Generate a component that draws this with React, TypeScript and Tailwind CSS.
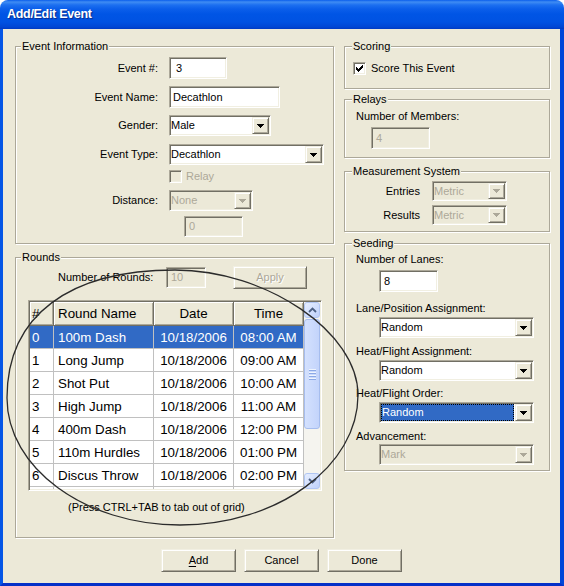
import React from "react";

// classic 3D borders used all over the dialog
const sunken =
  "border border-t-[#ACA899] border-l-[#ACA899] border-b-white border-r-white shadow-[inset_1px_1px_0_#716F64,inset_-1px_-1px_0_#F1EFE2]";
const raised =
  "border border-t-[#F1EFE2] border-l-[#F1EFE2] border-b-[#716F64] border-r-[#716F64] shadow-[inset_1px_1px_0_#fff,inset_-1px_-1px_0_#ACA899]";

type GroupProps = {
  title: string;
  className?: string;
  legend?: string;
  children?: React.ReactNode;
};

function Group({ title, className = "", legend = "left-[5px]", children }: GroupProps) {
  return (
    <div
      className={`relative border border-[#ACA899] shadow-[inset_1px_1px_0_#fff,1px_1px_0_#fff] ${className}`}
    >
      <span className={`absolute top-[-7px] ${legend} bg-[#ECE9D8] px-[1px] leading-[13px]`}>
        {title}
      </span>
      {children}
    </div>
  );
}

function TextBox({
  value,
  className = "",
  disabled,
}: {
  value: string;
  className?: string;
  disabled?: boolean;
}) {
  return (
    <div
      className={`${sunken} ${
        disabled ? "bg-[#ECE9D8] text-[#ACA899]" : "bg-white"
      } flex items-center ${className}`}
    >
      {value}
    </div>
  );
}

function Arrow({ disabled }: { disabled?: boolean }) {
  return (
    <svg width="7" height="4" viewBox="0 0 7 4" shapeRendering="crispEdges">
      <path
        d="M0 0h7v1H0z M1 1h5v1H1z M2 2h3v1H2z M3 3h1v1H3z"
        fill={disabled ? "#ACA899" : "#000"}
      />
    </svg>
  );
}

function Combo({
  value,
  className = "",
  disabled,
  focused,
}: {
  value: string;
  className?: string;
  disabled?: boolean;
  focused?: boolean;
}) {
  return (
    <div
      className={`${sunken} ${
        disabled ? "bg-[#ECE9D8] text-[#ACA899]" : "bg-white"
      } flex p-[1px] ${className}`}
    >
      <div className="flex-1 flex items-center min-w-0">
        {focused ? (
          <div className="flex-1 h-full flex items-center pl-[1px] mr-[1px] bg-[#316AC5] text-white outline-1 outline-dotted outline-[#000] -outline-offset-1">
            {value}
          </div>
        ) : (
          <span>{value}</span>
        )}
      </div>
      <div className={`w-[17px] h-full bg-[#ECE9D8] ${raised} flex items-center justify-center`}>
        <Arrow disabled={disabled} />
      </div>
    </div>
  );
}

function Check({ checked, disabled }: { checked?: boolean; disabled?: boolean }) {
  return (
    <div
      className={`w-[13px] h-[13px] shrink-0 ${sunken} ${
        disabled ? "bg-[#ECE9D8]" : "bg-white"
      } flex items-center justify-center`}
    >
      {checked && (
        <svg width="7" height="7" viewBox="0 0 7 7" shapeRendering="crispEdges">
          <path
            d="M6 0h1v1H6z M5 1h2v1H5z M0 2h1v1H0z M4 2h3v1H4z M0 3h2v1H0z M3 3h3v1H3z M0 4h5v1H0z M1 5h3v1H1z M2 6h1v1H2z"
            fill="#000"
          />
        </svg>
      )}
    </div>
  );
}

function Btn({
  children,
  disabled,
  className = "",
}: {
  children: React.ReactNode;
  disabled?: boolean;
  className?: string;
}) {
  return (
    <div
      className={`h-[23px] bg-[#ECE9D8] ${raised} flex items-center justify-center ${
        disabled ? "text-[#ACA899] [text-shadow:1px_1px_0_#fff]" : ""
      } ${className}`}
    >
      {children}
    </div>
  );
}

function Label({ children, className = "" }: { children: React.ReactNode; className?: string }) {
  return <div className={`leading-[13px] ${className}`}>{children}</div>;
}

const rounds = [
  ["0", "100m Dash", "10/18/2006", "08:00 AM"],
  ["1", "Long Jump", "10/18/2006", "09:00 AM"],
  ["2", "Shot Put", "10/18/2006", "10:00 AM"],
  ["3", "High Jump", "10/18/2006", "11:00 AM"],
  ["4", "400m Dash", "10/18/2006", "12:00 PM"],
  ["5", "110m Hurdles", "10/18/2006", "01:00 PM"],
  ["6", "Discus Throw", "10/18/2006", "02:00 PM"],
  ["", "", "", ""],
];

const cols = [
  { w: "w-[24px]", align: "justify-start pl-[2px]" },
  { w: "w-[100px]", align: "justify-start pl-[4px]" },
  { w: "w-[80px]", align: "justify-center" },
  { w: "w-[70px]", align: "justify-center" },
];

function ScrollBtn({ up }: { up?: boolean }) {
  return (
    <div className="h-[16px] rounded-[3px] border border-[#B1C6F3] bg-[linear-gradient(135deg,#E6EEFF,#BFD1FA)] flex items-center justify-center">
      <svg width="9" height="6" viewBox="0 0 9 6">
        <path
          d={up ? "M1 5L4.5 1.5L8 5" : "M1 1L4.5 4.5L8 1"}
          fill="none"
          stroke="#4D6185"
          strokeWidth="1.8"
        />
      </svg>
    </div>
  );
}

function RoundsGrid() {
  return (
    <div className={`ml-[12px] mt-[11px] w-[294px] h-[191px] p-[1px] ${sunken} bg-white flex`}>
      <div className="w-[274px] flex flex-col overflow-hidden text-[13.33px]">
        <div className="h-[24px] shrink-0 flex">
          {["#", "Round Name", "Date", "Time"].map((h, i) => (
            <div
              key={h}
              className={`${cols[i].w} h-full flex items-center ${cols[i].align} bg-[#ECE9D8] border-r border-b border-[#716F64] shadow-[inset_1px_1px_0_#fff,inset_-1px_-1px_0_#ACA899]`}
            >
              {h}
            </div>
          ))}
        </div>
        {rounds.map((r, ri) => (
          <div key={ri} className="h-[23px] shrink-0 flex">
            {r.map((c, ci) => (
              <div
                key={ci}
                className={`${cols[ci].w} h-full flex items-center ${cols[ci].align} border-r border-b border-[#C0C0C0] ${
                  ri === 0 ? "bg-[#316AC5] text-white" : "bg-white"
                }`}
              >
                {c}
              </div>
            ))}
          </div>
        ))}
      </div>
      <div className="w-[16px] flex flex-col bg-[#F5F4EF]">
        <ScrollBtn up />
        <div className="mt-[1px] h-[110px] rounded-[3px] border border-[#A6BDEE] bg-[linear-gradient(90deg,#D4E1FE,#C3D4FB)] flex flex-col items-center justify-center gap-[1px]">
          {[0, 1, 2, 3].map((i) => (
            <div key={i} className="w-[7px] flex flex-col">
              <div className="h-[1px] bg-[#EEF4FE]" />
              <div className="h-[1px] bg-[#8CA9E6]" />
            </div>
          ))}
        </div>
        <div className="flex-1" />
        <ScrollBtn />
      </div>
    </div>
  );
}

function EventInfo() {
  return (
    <Group title="Event Information" className="pt-[10px] pb-[6px]">
      <div className="flex items-center h-[22px]">
        <Label className="w-[142px] text-right">Event #:</Label>
        <TextBox value="3" className="ml-[11px] w-[58px] h-[22px] pl-[6px]" />
      </div>
      <div className="flex items-center h-[22px] mt-[7px]">
        <Label className="w-[142px] text-right">Event Name:</Label>
        <TextBox value="Decathlon" className="ml-[11px] w-[111px] h-[22px] pl-[3px]" />
      </div>
      <div className="flex items-center h-[21px] mt-[7px]">
        <Label className="w-[142px] text-right">Gender:</Label>
        <Combo value="Male" className="ml-[11px] w-[102px] h-[21px]" />
      </div>
      <div className="flex items-center h-[21px] mt-[8px]">
        <Label className="w-[142px] text-right">Event Type:</Label>
        <Combo value="Decathlon" className="ml-[11px] w-[155px] h-[21px]" />
      </div>
      <div className="flex items-center h-[13px] mt-[5px] pl-[153px] text-[#ACA899]">
        <Check disabled />
        <span className="ml-[4px] leading-[13px]">Relay</span>
      </div>
      <div className="flex items-center h-[21px] mt-[7px]">
        <Label className="w-[142px] text-right">Distance:</Label>
        <Combo value="None" disabled className="ml-[11px] w-[84px] h-[21px]" />
      </div>
      <div className="flex mt-[5px] pl-[168px]">
        <TextBox value="0" disabled className="w-[59px] h-[21px] pl-[4px]" />
      </div>
    </Group>
  );
}

function RoundsBox() {
  return (
    <Group title="Rounds" className="mt-[13px] pt-[8px] pb-[23px]">
      <div className="flex items-center h-[23px] pl-[42px]">
        <Label className="w-[108px]">Number of Rounds:</Label>
        <TextBox value="10" disabled className="w-[40px] h-[21px] pl-[4px]" />
        <Btn disabled className="ml-[27px] w-[74px]">
          Apply
        </Btn>
      </div>
      <RoundsGrid />
      <Label className="mt-[10px] pl-[52px]">(Press CTRL+TAB to tab out of grid)</Label>
    </Group>
  );
}

function RightColumn() {
  return (
    <div className="w-[206px] ml-[10px] flex flex-col">
      <Group title="Scoring" legend="left-[7px]" className="pt-[15px] pb-[13px] pl-[8px]">
        <div className="flex items-center h-[13px]">
          <Check checked />
          <span className="ml-[5px] leading-[13px]">Score This Event</span>
        </div>
      </Group>
      <Group title="Relays" legend="left-[7px]" className="mt-[10px] pt-[10px] pb-[8px]">
        <Label className="pl-[11px]">Number of Members:</Label>
        <div className="pl-[26px] mt-[4px]">
          <TextBox value="4" disabled className="w-[59px] h-[22px] pl-[4px]" />
        </div>
      </Group>
      <Group
        title="Measurement System"
        legend="left-[7px]"
        className="mt-[13px] pt-[9px] pb-[6px]"
      >
        <div className="flex items-center h-[20px]">
          <Label className="w-[75px] text-right">Entries</Label>
          <Combo value="Metric" disabled className="ml-[12px] w-[75px] h-[20px]" />
        </div>
        <div className="flex items-center h-[20px] mt-[4px]">
          <Label className="w-[75px] text-right">Results</Label>
          <Combo value="Metric" disabled className="ml-[12px] w-[75px] h-[20px]" />
        </div>
      </Group>
      <Group title="Seeding" legend="left-[7px]" className="mt-[11px] pt-[9px] pb-[5px]">
        <Label className="pl-[11px]">Number of Lanes:</Label>
        <div className="pl-[34px] mt-[4px]">
          <TextBox value="8" className="w-[59px] h-[22px] pl-[4px]" />
        </div>
        <Label className="pl-[11px] mt-[10px]">Lane/Position Assignment:</Label>
        <div className="pl-[34px] mt-[2px]">
          <Combo value="Random" className="w-[155px] h-[21px]" />
        </div>
        <Label className="pl-[11px] mt-[7px]">Heat/Flight Assignment:</Label>
        <div className="pl-[34px] mt-[2px]">
          <Combo value="Random" className="w-[155px] h-[21px]" />
        </div>
        <Label className="pl-[11px] mt-[6px]">Heat/Flight Order:</Label>
        <div className="pl-[34px] mt-[2px]">
          <Combo value="Random" focused className="w-[155px] h-[21px]" />
        </div>
        <Label className="pl-[11px] mt-[7px] text-[#000]">Advancement:</Label>
        <div className="pl-[34px] mt-[1px]">
          <Combo value="Mark" disabled className="w-[155px] h-[21px]" />
        </div>
      </Group>
    </div>
  );
}

export default function App() {
  return (
    <div className="relative w-[564px] h-[586px] flex flex-col bg-white font-['Liberation_Sans',Arial,sans-serif] text-[11px] leading-[13px] text-black select-none">
      <div className="h-[29px] shrink-0 rounded-t-[8px] bg-[linear-gradient(180deg,#0A5EEC_0px,#3F8CF3_2px,#1C6FF0_5px,#0B5EEA_9px,#0055E5_14px,#0052E2_22px,#0046D4_27px,#003AC2_29px)] flex items-center pl-[7px]">
        <span className="text-white font-bold text-[12.5px] tracking-[-0.3px] [text-shadow:1px_1px_1px_#0B2A8A]">
          Add/Edit Event
        </span>
      </div>
      <div className="flex-1 flex flex-col bg-[#ECE9D8] border-l-[3px] border-r-[4px] border-b-[3px] border-l-[#0556E6] border-r-[#0046D8] border-b-[#0530C8]">
        <div className="flex pt-[17px] pl-[12px]">
          <div className="w-[319px] flex flex-col">
            <EventInfo />
            <RoundsBox />
          </div>
          <RightColumn />
        </div>
        <div className="flex justify-center gap-[8px] mt-[11px]">
          <Btn className="w-[75px]">
            <span>
              <span className="underline underline-offset-2">A</span>dd
            </span>
          </Btn>
          <Btn className="w-[75px]">Cancel</Btn>
          <Btn className="w-[75px]">Done</Btn>
        </div>
      </div>
      {/* hand-drawn annotation ring over the rounds grid */}
      <svg
        className="absolute inset-0 pointer-events-none"
        width="564"
        height="586"
        viewBox="0 0 564 586"
      >
        <path
          d="M7 398 C7 315 70 270 175 270 C266 270 358 332 358 395 C358 466 278 525 180 525 C85 525 7 468 7 398 Z"
          fill="none"
          stroke="#2b2b2b"
          strokeWidth="1.3"
        />
      </svg>
    </div>
  );
}
